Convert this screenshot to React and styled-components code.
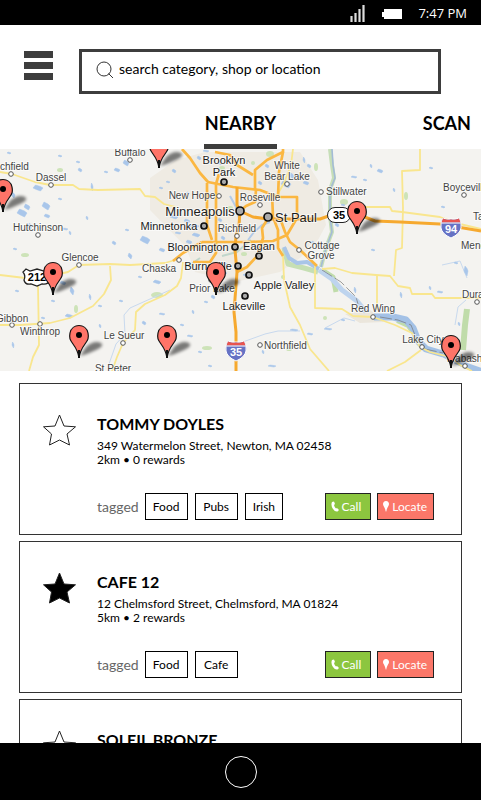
import React, { useState } from "react";
import styled, { createGlobalStyle } from "styled-components";

const GlobalStyle = createGlobalStyle`
  *, *::before, *::after { box-sizing: border-box; }
  body { margin: 0; background: #fff; color: #000; font-family: Lato, "Open Sans", sans-serif; }
  button, input { font: inherit; color: inherit; }
  h2, p, ul { margin: 0; padding: 0; }
`;

const Screen = styled.div`
  display: flex;
  flex-direction: column;
  height: 100vh;
`;

const StatusBar = styled.div`
  flex: none;
  display: flex;
  align-items: center;
  justify-content: flex-end;
  height: 25px;
  padding: 0 14px 0 0;
  background: #000;
  color: #fff;
  font: 13px/25px "Open Sans", "Noto Sans", sans-serif;
`;

const SignalIcon = styled.svg`
  width: 16px;
  height: 18px;
  margin-right: 15px;
`;

const BatteryIcon = styled.svg`
  width: 22px;
  height: 12px;
  margin: 2px 15px 0 0;
`;

const Clock = styled.time`
  padding-top: 2px;
`;

const Header = styled.header`
  flex: none;
  display: flex;
  align-items: flex-start;
  gap: 26px;
  padding: 24px 40px 0 24px;
`;

const MenuButton = styled.button`
  display: flex;
  flex: none;
  flex-direction: column;
  gap: 4px;
  width: 29px;
  margin-top: 2px;
  padding: 0;
  border: 0;
  background: none;
`;

const MenuBar = styled.span`
  height: 7px;
  background: #3d3d3d;
`;

const SearchBox = styled.label`
  display: flex;
  flex: 1;
  gap: 5px;
  height: 45px;
  padding: 8px 14px;
  border: 3px solid #3d3d3d;
`;

const SearchIcon = styled.svg`
  flex: none;
  width: 18px;
  height: 18px;
  margin-top: 1px;
`;

const SearchInput = styled.input`
  flex: 1;
  min-width: 0;
  height: 18px;
  padding: 0;
  border: 0;
  outline: 0;
  background: none;
  font-size: 14px;
  line-height: 18px;
  &::placeholder { color: #000; opacity: 1; }
`;

const Tabs = styled.nav`
  flex: none;
  display: grid;
  grid-template-columns: 1fr auto 1fr;
  height: 55px;
  padding: 0 10px;
`;

const Tab = styled.a`
  grid-column: ${(p) => p.$column};
  justify-self: ${(p) => (p.$column === 3 ? "end" : "center")};
  padding: ${(p) => (p.$active ? "16px 1px 0" : "16px 0 0")};
  border-bottom: 5px solid ${(p) => (p.$active ? "#3d3d3d" : "transparent")};
  color: #000;
  font-size: 18px;
  font-weight: 700;
  line-height: 26px;
  text-decoration: none;
`;

const MapView = styled.svg`
  flex: none;
  display: block;
  width: 100%;
  height: 222px;
  font-family: "Liberation Sans", Arial, sans-serif;
`;

const List = styled.main`
  flex: 1;
  display: flex;
  flex-direction: column;
  gap: 6px;
  min-height: 0;
  padding: 12px 19px;
  overflow-y: auto;
  scrollbar-width: none;
`;

const Card = styled.article`
  flex: none;
  display: grid;
  grid-template-columns: 33px 1fr;
  gap: 21px;
  padding: 30px 27px 14px 23px;
  border: 1px solid #333;
`;

const StarButton = styled.button`
  width: 33px;
  height: 33px;
  padding: 0;
  border: 0;
  background: none;
`;

const Star = styled.svg`
  display: block;
  width: 33px;
  height: 33px;
  fill: ${(p) => (p.$filled ? "#000" : "none")};
  stroke: #222;
`;

const Title = styled.h2`
  font-size: 16px;
  font-weight: 700;
  line-height: 20px;
`;

const Details = styled.p`
  margin: 5px 0 26px;
  font-size: 12px;
  line-height: 14px;
`;

const Line = styled.span`
  display: block;
`;

const CardFooter = styled.div`
  display: flex;
  align-items: center;
  justify-content: space-between;
`;

const TagGroup = styled.div`
  display: flex;
  align-items: center;
  gap: 6px;
`;

const TagLabel = styled.span`
  color: #666;
  font-size: 14px;
`;

const TagList = styled.ul`
  display: flex;
  gap: 7px;
  list-style: none;
`;

const Tag = styled.button`
  min-width: 38px;
  height: 27px;
  padding: 0 7px;
  border: 1px solid #000;
  background: #fff;
  font-size: 12px;
  line-height: 25px;
  &:not(:disabled) { min-width: ${(p) => (p.$short ? "38px" : "43px")}; }
`;

const Actions = styled.div`
  display: flex;
  gap: 6px;
`;

const Action = styled.button`
  display: flex;
  align-items: center;
  gap: 3px;
  height: 27px;
  padding: 0 ${(p) => (p.$wide ? "6px" : "9px")} 0 5px;
  border: 1px solid #222;
  background: ${(p) => p.$color};
  color: #fff;
  font-size: 12px;
  line-height: 25px;
`;

const PhoneIcon = styled.svg`
  width: 8px;
  height: 11px;
`;

const PlaceIcon = styled.svg`
  width: 6px;
  height: 11px;
`;

const BottomBar = styled.footer`
  flex: none;
  display: flex;
  align-items: center;
  justify-content: center;
  height: 57px;
  background: #000;
`;

const HomeButton = styled.button`
  width: 32px;
  height: 32px;
  padding: 0;
  border: 1px solid #fff;
  border-radius: 50%;
  background: none;
`;

const minorRoads = [
  "0,172 12,174 35,182 50,185 73,185 79,189 98,190 140,189 145,196 155,197 164,204 176,207",
  "0,275 25,278 50,276 68,272 79,265 110,264 130,265 165,263 175,260",
  "110,266 111,280 104,294 93,306 70,318 50,323 20,325 0,325",
  "38,285 39,345 33,357 29,371",
  "183,262 181,278 177,286 165,295 145,304 136,312 135,330 123,343 117,357 112,371",
  "283,255 284,280 290,307 300,325 310,349 329,371",
  "315,266 315,308 342,309 353,316 373,317 395,325 412,333 420,347 430,352 450,357 460,365 472,371",
  "322,269 335,268 352,273 376,275 390,276 398,286 410,288 412,294 432,294 435,298 465,298 481,298",
  "377,275 377,310",
  "420,149 420,170 402,171 403,208 402,248 396,250 394,276",
  "350,207 390,207 392,211 402,212 440,217 460,224 481,229",
  "421,350 405,362 387,371",
  "293,149 291,165 284,183 276,197",
];

const highways = [
  "182,149 190,158 200,173 208,182 233,187 260,190 278,197 297,197 297,218 287,235 273,241 247,242 202,242",
  "207,183 207,225 212,240",
  "219,174 216,184 216,253 210,262 193,262",
  "215,152 230,155 237,165 253,175",
  "255,190 255,170 267,160 283,152 283,149",
  "283,152 279,172 278,197",
  "272,193 273,217 278,230 278,248 283,256",
  "256,190 255,202 246,206 240,211",
  "280,218 285,232 290,242 300,250 317,266",
  "267,220 262,228 263,238 258,255 247,267 237,272",
  "202,242 183,253 173,261",
];

const interstates = [
  "237,187 237,205 240,211 253,217 268,219 295,219 320,219 340,212 357,214 375,221 400,222 440,224 481,231",
  "240,211 239,225 236,236 235,250 237,272 234,312 236,332 236,371",
];

const lakes = [
  [38, 188, 5, 3], [27, 207, 3, 3], [46, 206, 4, 4], [22, 213, 5, 4], [47, 216, 3, 2], [30, 226, 2, 3],
  [126, 163, 3, 3], [117, 170, 3, 2], [60, 156, 2, 1], [80, 170, 2, 2], [92, 187, 1, 4], [106, 172, 2, 1],
  [65, 229, 3, 1], [70, 233, 1, 2], [145, 240, 5, 4], [130, 256, 2, 3], [114, 243, 2, 2], [127, 230, 2, 1],
  [151, 225, 3, 2], [162, 250, 3, 2], [194, 226, 5, 2], [187, 221, 3, 2], [174, 217, 4, 2], [196, 235, 4, 2],
  [189, 242, 3, 2], [178, 233, 3, 1], [220, 220, 2, 2], [223, 238, 2, 2], [246, 231, 2, 2], [260, 183, 2, 2],
  [267, 166, 2, 2], [286, 184, 5, 4], [292, 176, 2, 3], [309, 166, 2, 2], [304, 160, 1, 3], [220, 163, 2, 2],
  [199, 158, 2, 2], [206, 151, 3, 1], [174, 171, 2, 2], [168, 182, 2, 1], [188, 193, 2, 1], [161, 188, 2, 1],
  [78, 162, 2, 1], [9, 153, 2, 1], [13, 195, 2, 3], [60, 199, 2, 1], [87, 218, 1, 2], [15, 249, 2, 1],
  [17, 291, 2, 1], [63, 283, 3, 2], [72, 291, 2, 4], [53, 301, 2, 1], [69, 316, 4, 2], [90, 297, 1, 3],
  [100, 306, 2, 1], [13, 345, 1, 3], [43, 318, 2, 1], [100, 326, 1, 2], [121, 301, 2, 1], [157, 282, 4, 2],
  [144, 323, 2, 2], [162, 314, 3, 1], [140, 277, 2, 1], [193, 312, 1, 2], [206, 302, 2, 1], [213, 297, 2, 2],
  [182, 325, 2, 1], [190, 336, 3, 1], [200, 352, 2, 1], [210, 366, 2, 1], [224, 288, 3, 1], [223, 273, 4, 2],
  [294, 330, 4, 1], [263, 352, 1, 2], [310, 334, 3, 1], [272, 366, 4, 1], [245, 275, 2, 1], [225, 264, 3, 1],
  [371, 166, 1, 2], [380, 171, 3, 2], [365, 180, 2, 1], [343, 205, 2, 1], [360, 192, 2, 1], [394, 190, 1, 2],
  [443, 207, 2, 1], [470, 189, 3, 1], [431, 168, 2, 1], [354, 177, 3, 1], [373, 250, 2, 1], [337, 225, 2, 2],
  [440, 292, 3, 1], [466, 271, 2, 5], [456, 263, 2, 1], [459, 324, 1, 2], [343, 320, 2, 1], [328, 329, 4, 1],
  [355, 290, 1, 3], [430, 288, 1, 2], [401, 295, 1, 3], [468, 248, 2, 1], [306, 183, 3, 2], [313, 243, 2, 2],
];

const parks = [
  [60, 170, 3, 2], [25, 255, 4, 2], [222, 168, 3, 2], [270, 154, 4, 3], [344, 202, 4, 3], [406, 196, 2, 4],
  [230, 208, 3, 2], [207, 348, 5, 2], [76, 309, 2, 4], [157, 295, 6, 3], [289, 349, 3, 2], [325, 318, 2, 2],
  [316, 167, 2, 4], [244, 254, 3, 2], [190, 265, 4, 2], [330, 201, 2, 6], [283, 277, 2, 2], [253, 163, 2, 2],
];

const places = [
  { name: "Buffalo", x: 130, y: 156, dot: [130, 160] },
  { name: "chfield", x: 0, y: 170, anchor: "start", dot: [11, 174] },
  { name: "Dassel", x: 51, y: 181, dot: [51, 185] },
  { name: "Hutchinson", x: 38, y: 231, dot: [38, 235] },
  { name: "Glencoe", x: 80, y: 261, dot: [79, 265] },
  { name: "Gibbon", x: -4, y: 322, anchor: "start", dot: [12, 325] },
  { name: "Winthrop", x: 40, y: 335, dot: [40, 324] },
  { name: "Le Sueur", x: 124, y: 339, dot: [123, 343] },
  { name: "St Peter", x: 113, y: 372 },
  { name: "Chaska", x: 159, y: 272, dot: [179, 260] },
  { name: "New Hope", x: 192, y: 199, dot: [219, 196] },
  { name: "Roseville", x: 260, y: 201, dot: [260, 205] },
  { name: "Richfield", x: 237, y: 232, dot: [237, 236] },
  { name: "White", x: 287, y: 169 },
  { name: "Bear Lake", x: 287, y: 180, dot: [287, 184] },
  { name: "Stillwater", x: 326, y: 195, anchor: "start", dot: [321, 192] },
  { name: "Boyceville", x: 443, y: 191, anchor: "start", dot: [464, 195] },
  { name: "Tai", x: 473, y: 220, anchor: "start" },
  { name: "Meno", x: 461, y: 249, anchor: "start" },
  { name: "Cottage", x: 322, y: 249, dot: [299, 250] },
  { name: "Grove", x: 321, y: 259 },
  { name: "Prior Lake", x: 212, y: 292, dot: [211, 280] },
  { name: "Northfield", x: 264, y: 349, anchor: "start", dot: [260, 345] },
  { name: "Red Wing", x: 373, y: 312, dot: [373, 317] },
  { name: "Lake City", x: 423, y: 343, dot: [422, 347] },
  { name: "Durand", x: 462, y: 298, anchor: "start", dot: [477, 302] },
  { name: "Wabasha", x: 446, y: 362, anchor: "start", dot: [465, 366] },
  { name: "Brooklyn", x: 224, y: 164, size: 11 },
  { name: "Park", x: 224, y: 176, size: 11, dot: [224, 182] },
  { name: "Minnetonka", x: 169, y: 230, size: 11, dot: [204, 226] },
  { name: "Bloomington", x: 198, y: 251, size: 11, dot: [235, 247] },
  { name: "Eagan", x: 259, y: 250, size: 11, dot: [259, 256] },
  { name: "Burnsville", x: 208, y: 270, size: 11, dot: [238, 266] },
  { name: "Apple Valley", x: 284, y: 289, size: 11, dot: [249, 275] },
  { name: "Lakeville", x: 244, y: 310, size: 11, dot: [245, 296] },
  { name: "Minneapolis", x: 200, y: 216, size: 13, dot: [240, 211] },
  { name: "St Paul", x: 296, y: 222, size: 13, dot: [268, 217] },
];

const pins = [[159, 168], [3, 212], [357, 234], [53, 295], [216, 295], [79, 358], [167, 358], [451, 368]];

function Place({ name, x, y, dot, size = 10, anchor = "middle" }) {
  const city = size > 10;
  return (
    <g>
      {dot && (
        <circle
          cx={dot[0]}
          cy={dot[1]}
          r={size === 13 ? 4 : city ? 3 : 2.3}
          fill={city ? "#aaa" : "#fff"}
          stroke={city ? "#111" : "#555"}
          strokeWidth={city ? 1.7 : 1}
        />
      )}
      <text
        x={x}
        y={y}
        textAnchor={anchor}
        fontSize={size}
        fill={city ? "#1c1c1c" : "#444"}
        stroke="#fff"
        strokeOpacity="0.6"
        strokeWidth="2"
        paintOrder="stroke"
      >
        {name}
      </text>
    </g>
  );
}

function Interstate({ x, y, number }) {
  return (
    <g transform={`translate(${x} ${y})`}>
      <path d="M-8-10Q-4-8 0-9Q4-8 8-10Q11-5 10 0Q9 6 0 10Q-9 6-10 0Q-11-5-8-10Z" fill="#6672c4" stroke="#fff" />
      <path d="M-8-9.500Q-4-7.500 0-8.500Q4-7.500 8-9.500L9.500-5.500H-9.500Z" fill="#e8544f" />
      <path d="M-9.800-5H9.800" stroke="#fff" />
      <text y="5" textAnchor="middle" fontSize="11" fontWeight="700" fill="#fff">{number}</text>
    </g>
  );
}

function NearbyMap() {
  return (
    <MapView viewBox="0 149 481 222" preserveAspectRatio="xMidYMid slice" role="img" aria-label="Map of nearby shops">
      <defs>
        <filter id="soft" x="-50%" y="-50%" width="200%" height="200%">
          <feGaussianBlur stdDeviation="1.5" />
        </filter>
      </defs>
      <rect y="149" width="481" height="222" fill="#f4f3f0" />
      <path d="M150 178L176 160L205 152H300L318 180L326 225L318 240L300 258L280 272L235 282L195 272L186 247L150 210Z" fill="#efebe3" />
      <path d="M345 314L370 310L384 322L360 323Z" fill="#ebe6dc" />
      {parks.map(([x, y, rx, ry]) => (
        <ellipse key={`${x}-${y}`} cx={x} cy={y} rx={rx} ry={ry} fill="#cde3b8" />
      ))}
      <g fill="none" strokeLinejoin="round">
        <path d="M322 270L333 277L336 292" stroke="#c0dcaa" strokeWidth="5" />
        <path d="M467 309L465 325L463 350" stroke="#c0dcaa" strokeWidth="6" />
        <path d="M397 321L408 326L412 332" stroke="#c0dcaa" strokeWidth="4" />
        <path d="M284 248L288 264L304 268L318 272" stroke="#c6dfb4" strokeWidth="5" />
        <path d="M330 149L332 165L334 178L330 190L330 216L332 232L326 248L321 267" stroke="#c6deb8" strokeWidth="4" />
        <path d="M332 149L333 165L335 178L330 190L330 216L332 232L326 248L321 267" stroke="#a3bbd6" strokeWidth="1.600" />
        <path d="M284 247L289 258L297 263L307 262L319 269" stroke="#a9c5e8" strokeWidth="4" />
        <path d="M319 270L332 279L342 290L357 301L366 312" stroke="#bed4ee" strokeWidth="5" />
        <path d="M374 317L393 317L406 320L413 328L418 341L426 349L443 354" stroke="#a3c1e6" strokeWidth="7" />
        <path d="M443 354L458 362L467 366L481 371" stroke="#a3c1e6" strokeWidth="6" />
        <path d="M322 270L341 282L356 297L358 304M380 317L398 320L411 325L415 335L425 349L443 353" stroke="#777" strokeWidth="0.7" strokeDasharray="12 3" />
        <path d="M170 290L150 299L130 308L124 315L125 334L116 344L109 364M240 343L265 334L278 331L300 331M325 328L344 318L355 321M442 265L460 261L467 278M466 300L458 307L455 325" stroke="#c8d9ee" strokeWidth="1" />
        <path d="M230 196L236 207L240 222M248 240L254 232L262 225L270 222" stroke="#b3cbe8" strokeWidth="2" />
        <path d="M190 265L200 258M222 256L237 252L251 240" stroke="#c0d6cb" strokeWidth="2" />
      </g>
      {lakes.map(([x, y, rx, ry]) => (
        <path
          key={`${x}-${y}`}
          d={`M${x - rx} ${y}L${x - rx / 2} ${y - ry}L${x + rx / 2} ${y - ry / 2}L${x + rx} ${y}L${x + rx / 2} ${y + ry}L${x - rx / 3} ${y + ry / 2}Z`}
          fill="#a9c6ea"
          stroke="#a9c6ea"
          strokeWidth="0.5"
          strokeLinejoin="round"
        />
      ))}
      <g fill="none" strokeLinejoin="round">
        {minorRoads.map((points) => (
          <polyline key={points} points={points} stroke="#f9e68e" strokeWidth="1.800" />
        ))}
        {highways.map((points) => (
          <polyline key={points} points={points} stroke="#fbb741" strokeWidth="2.700" />
        ))}
        {interstates.map((points) => (
          <polyline key={points} points={points} stroke="#f6a92f" strokeWidth="3" />
        ))}
      </g>
      {places.map((place) => (
        <Place key={place.name} {...place} />
      ))}
      <Interstate x={236} y={351} number="35" />
      <Interstate x={451} y={228} number="94" />
      <rect x="327.500" y="207.500" width="23" height="15" rx="7.500" fill="#fff" stroke="#222" />
      <text x="339" y="219" textAnchor="middle" fontSize="11" fontWeight="700">35</text>
      <path d="M26 269L30 271L37 269L44 271L49 269L51 273Q49 276 50 280Q48 285 42 284L37 286L31 284Q25 285 24 280Q26 276 23 272Z" fill="#fff" stroke="#222" strokeWidth="1.300" />
      <text x="37" y="281" textAnchor="middle" fontSize="11" fontWeight="700">212</text>
      {pins.map(([x, y]) => (
        <g key={`${x}-${y}`} transform={`translate(${x} ${y})`}>
          <path d="M1-2L7-11Q15-18 22-15Q26-12 17-8Q9-4 1-2Z" fill="#000" opacity="0.5" filter="url(#soft)" />
          <path
            d="M0 0C-1-7-3-10-6-14C-9-18-10-20-9-25C-8-30-4-32.500 0-32.500C4-32.500 8-30 9-25C10-20 9-18 6-14C3-10 1-7 0 0Z"
            fill="#ff7468"
            stroke="#111"
            strokeWidth="1.200"
          />
          <path d="M0-8V0" stroke="#111" strokeWidth="2" />
          <circle cy="-23" r="3" />
        </g>
      ))}
    </MapView>
  );
}

const shops = [
  { name: "TOMMY DOYLES", address: "349 Watermelon Street, Newton, MA 02458", info: "2km • 0 rewards", tags: ["Food", "Pubs", "Irish"], starred: false },
  { name: "CAFE 12", address: "12 Chelmsford Street, Chelmsford, MA 01824", info: "5km • 2 rewards", tags: ["Food", "Cafe"], starred: true },
  { name: "SOLEIL BRONZE", address: "", info: "", tags: [], starred: false },
];

function ShopCard({ shop }) {
  const [starred, setStarred] = useState(shop.starred);
  return (
    <Card>
      <StarButton type="button" aria-label={`Favourite ${shop.name}`} aria-pressed={starred} onClick={() => setStarred(!starred)}>
        <Star viewBox="0 0 33 33" $filled={starred}>
          <path d="M16.500 1L21 12L32.500 12.800L24 20L26.500 31L16.500 26L6.500 31L8.500 20L.5 12.800L12 12Z" />
        </Star>
      </StarButton>
      <div>
        <Title>{shop.name}</Title>
        <Details>
          <Line>{shop.address}</Line>
          <Line>{shop.info}</Line>
        </Details>
        {shop.tags.length > 0 && (
          <CardFooter>
            <TagGroup>
              <TagLabel>tagged</TagLabel>
              <TagList>
                {shop.tags.map((tag) => (
                  <li key={tag}><Tag type="button" $short={tag === "Irish"}>{tag}</Tag></li>
                ))}
              </TagList>
            </TagGroup>
            <Actions>
              <Action type="button" $color="#8cc63f">
                <PhoneIcon viewBox="0 0 8 11" aria-hidden="true">
                  <path d="M1 1L3 .5L4 3L3 4Q3.500 6.500 5 7.500L6 7L8 9L6.500 10.500Q4 11 2 8Q-.5 4 1 1Z" fill="#fff" />
                </PhoneIcon>
                Call
              </Action>
              <Action type="button" $color="#fb7769" $wide>
                <PlaceIcon viewBox="0 0 6 11" aria-hidden="true">
                  <path d="M3 0C5 0 6 1.500 6 3C6 5 4 6 3.300 10.500H2.700C2 6 0 5 0 3C0 1.500 1 0 3 0Z" fill="#fff" />
                </PlaceIcon>
                Locate
              </Action>
            </Actions>
          </CardFooter>
        )}
      </div>
    </Card>
  );
}

export default function App() {
  return (
    <Screen>
      <GlobalStyle />
      <StatusBar>
        <SignalIcon viewBox="0 0 16 18" aria-hidden="true">
          <path d="M1.500 18V12M5.500 18V9M9.500 18V5M13.500 18V1" stroke="#ddd" strokeWidth="2.200" />
        </SignalIcon>
        <BatteryIcon viewBox="0 0 22 12" aria-hidden="true">
          <path d="M3 1H21V11H3V9H1V4H3Z" fill="#fff" />
        </BatteryIcon>
        <Clock>7:47 PM</Clock>
      </StatusBar>
      <Header>
        <MenuButton type="button" aria-label="Menu">
          <MenuBar />
          <MenuBar />
          <MenuBar />
        </MenuButton>
        <SearchBox>
          <SearchIcon viewBox="0 0 18 18" aria-hidden="true">
            <circle cx="8" cy="8" r="7" fill="none" stroke="#333" />
            <path d="M12.500 12.500L17 17" stroke="#333" />
          </SearchIcon>
          <SearchInput type="search" aria-label="Search" placeholder="search category, shop or location" />
        </SearchBox>
      </Header>
      <Tabs>
        <Tab href="#nearby" $column={2} $active aria-current="page">NEARBY</Tab>
        <Tab href="#scan" $column={3}>SCAN</Tab>
      </Tabs>
      <NearbyMap />
      <List>
        {shops.map((shop) => (
          <ShopCard key={shop.name} shop={shop} />
        ))}
      </List>
      <BottomBar>
        <HomeButton type="button" aria-label="Home" />
      </BottomBar>
    </Screen>
  );
}
